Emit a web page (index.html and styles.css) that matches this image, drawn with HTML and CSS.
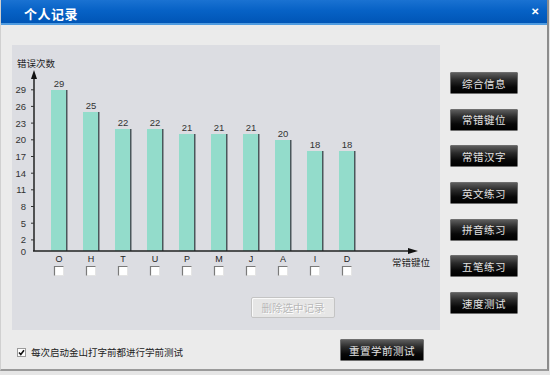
FILE: index.html
```html
<!DOCTYPE html>
<html>
<head>
  <meta charset="utf-8">
  <link rel="stylesheet" href="styles.css">
</head>
<body>
  <div class="window">
    <div class="titlebar">
      <span class="title">个人记录</span>
      <span class="close">&#x2715;</span>
    </div>
    <div class="content">
      <div class="panel">
        <svg class="chart" width="428" height="252" viewBox="0 0 428 252">
          <text class="axis-label" x="5" y="22">错误次数</text>
          <!-- y axis -->
          <line class="axis" x1="22" y1="31" x2="22" y2="206"/>
          <polygon class="arrow" points="22,25 19,34 25,34"/>
          <g class="ticks">
            <line x1="19" y1="44.8" x2="22" y2="44.8"/>
            <line x1="19" y1="61.4" x2="22" y2="61.4"/>
            <line x1="19" y1="78.1" x2="22" y2="78.1"/>
            <line x1="19" y1="94.8" x2="22" y2="94.8"/>
            <line x1="19" y1="111.5" x2="22" y2="111.5"/>
            <line x1="19" y1="128.2" x2="22" y2="128.2"/>
            <line x1="19" y1="144.8" x2="22" y2="144.8"/>
            <line x1="19" y1="161.5" x2="22" y2="161.5"/>
            <line x1="19" y1="178.2" x2="22" y2="178.2"/>
            <line x1="19" y1="194.9" x2="22" y2="194.9"/>
          </g>
          <g class="tick-labels">
            <text x="14" y="48.3">29</text>
            <text x="14" y="64.9">26</text>
            <text x="14" y="81.6">23</text>
            <text x="14" y="98.3">20</text>
            <text x="14" y="115">17</text>
            <text x="14" y="131.7">14</text>
            <text x="14" y="148.3">11</text>
            <text x="14" y="165">8</text>
            <text x="14" y="181.7">5</text>
            <text x="14" y="198.4">2</text>
            <text x="14" y="210">0</text>
          </g>
          <!-- bars -->
          <g class="bars">
            <rect x="39" y="45" width="15" height="161"/>
            <rect x="71" y="67" width="15" height="139"/>
            <rect x="103" y="84" width="15" height="122"/>
            <rect x="135" y="84" width="15" height="122"/>
            <rect x="167" y="89" width="15" height="117"/>
            <rect x="199" y="89" width="15" height="117"/>
            <rect x="231" y="89" width="15" height="117"/>
            <rect x="263" y="95" width="15" height="111"/>
            <rect x="295" y="106" width="15" height="100"/>
            <rect x="327" y="106" width="15" height="100"/>
          </g>
          <g class="bar-edges">
            <rect x="54" y="45" width="1.5" height="161"/>
            <rect x="86" y="67" width="1.5" height="139"/>
            <rect x="118" y="84" width="1.5" height="122"/>
            <rect x="150" y="84" width="1.5" height="122"/>
            <rect x="182" y="89" width="1.5" height="117"/>
            <rect x="214" y="89" width="1.5" height="117"/>
            <rect x="246" y="89" width="1.5" height="117"/>
            <rect x="278" y="95" width="1.5" height="111"/>
            <rect x="310" y="106" width="1.5" height="100"/>
            <rect x="342" y="106" width="1.5" height="100"/>
          </g>
          <g class="values">
            <text x="47" y="42">29</text>
            <text x="79" y="64">25</text>
            <text x="111" y="81">22</text>
            <text x="143" y="81">22</text>
            <text x="175" y="86">21</text>
            <text x="207" y="86">21</text>
            <text x="239" y="86">21</text>
            <text x="271" y="92">20</text>
            <text x="303" y="103">18</text>
            <text x="335" y="103">18</text>
          </g>
          <!-- x axis -->
          <line class="axis" x1="21" y1="206" x2="398" y2="206"/>
          <polygon class="arrow" points="406,206 396,203 396,209"/>
          <text class="axis-label" x="380" y="221">常错键位</text>
          <g class="keys">
            <text x="47" y="217">O</text>
            <text x="79" y="217">H</text>
            <text x="111" y="217">T</text>
            <text x="143" y="217">U</text>
            <text x="175" y="217">P</text>
            <text x="207" y="217">M</text>
            <text x="239" y="217">J</text>
            <text x="271" y="217">A</text>
            <text x="303" y="217">I</text>
            <text x="335" y="217">D</text>
          </g>
          <g class="boxes">
            <rect x="42.5" y="221.5" width="9" height="9"/>
            <rect x="74.5" y="221.5" width="9" height="9"/>
            <rect x="106.5" y="221.5" width="9" height="9"/>
            <rect x="138.5" y="221.5" width="9" height="9"/>
            <rect x="170.5" y="221.5" width="9" height="9"/>
            <rect x="202.5" y="221.5" width="9" height="9"/>
            <rect x="234.5" y="221.5" width="9" height="9"/>
            <rect x="266.5" y="221.5" width="9" height="9"/>
            <rect x="298.5" y="221.5" width="9" height="9"/>
            <rect x="330.5" y="221.5" width="9" height="9"/>
          </g>
          <g class="box-shade">
            <path d="M42.5,230.5 V221.5 H51.5"/>
            <path d="M74.5,230.5 V221.5 H83.5"/>
            <path d="M106.5,230.5 V221.5 H115.5"/>
            <path d="M138.5,230.5 V221.5 H147.5"/>
            <path d="M170.5,230.5 V221.5 H179.5"/>
            <path d="M202.5,230.5 V221.5 H211.5"/>
            <path d="M234.5,230.5 V221.5 H243.5"/>
            <path d="M266.5,230.5 V221.5 H275.5"/>
            <path d="M298.5,230.5 V221.5 H307.5"/>
            <path d="M330.5,230.5 V221.5 H339.5"/>
          </g>
        </svg>
        <button class="delete-btn" disabled>删除选中记录</button>
      </div>
      <div class="side">
        <button class="dark-btn">综合信息</button>
        <button class="dark-btn">常错键位</button>
        <button class="dark-btn">常错汉字</button>
        <button class="dark-btn">英文练习</button>
        <button class="dark-btn">拼音练习</button>
        <button class="dark-btn">五笔练习</button>
        <button class="dark-btn">速度测试</button>
      </div>
    </div>
    <div class="footer">
      <label class="check-row">
        <svg class="check" width="9" height="9" viewBox="0 0 9 9">
          <rect x="0.5" y="0.5" width="8" height="8" fill="#fff" stroke="#9a9a9a"/>
          <path d="M2,4.5 L3.8,6.5 L7,2.2" fill="none" stroke="#111" stroke-width="1.6"/>
        </svg>
        每次启动金山打字前都进行学前测试
      </label>
      <button class="dark-btn reset-btn">重置学前测试</button>
    </div>
  </div>
</body>
</html>
```

FILE: styles.css
```css
html {
  background: #e6e6e6;
}
body {
  margin: 0;
  width: 550px;
  height: 375px;
  overflow: hidden;
  font-family: "Liberation Sans", "Noto Sans CJK SC", sans-serif;
}
.window {
  width: 546px;
  height: 369px;
  background: #ebebeb;
  border-left: 1px solid #d0d0d0;
  border-right: 2px solid #8c8c8c;
  border-bottom: 2px solid #9a9a9a;
}
.titlebar {
  height: 23px;
  background: linear-gradient(to bottom, #1a72d2 0%, #0762c6 45%, #0055b6 100%);
  border-bottom: 2px solid #4f9be0;
  display: flex;
  align-items: center;
  justify-content: space-between;
  padding: 0 8px 0 23px;
  color: #fff;
}
.title {
  font-size: 13px;
  font-weight: bold;
  letter-spacing: 0.5px;
  margin-top: 3px;
}
.close {
  font-size: 10px;
  font-weight: bold;
}
.content {
  display: flex;
  padding: 20px 0 0 11px;
  height: 285px;
}
.panel {
  width: 428px;
  height: 285px;
  background: #dcdde2;
}
.chart {
  display: block;
  font-family: "Liberation Sans", "Noto Sans CJK SC", sans-serif;
}
.axis {
  stroke: #222;
  stroke-width: 1.5;
}
.arrow {
  fill: #111;
}
.ticks line {
  stroke: #333;
  stroke-width: 1;
}
.axis-label {
  font-size: 9.5px;
  fill: #222;
}
.tick-labels text {
  font-size: 9.5px;
  fill: #333;
  text-anchor: end;
}
.bars rect {
  fill: #93dccb;
}
.bar-edges rect {
  fill: #4a575b;
}
.values text {
  font-size: 9.5px;
  fill: #333;
  text-anchor: middle;
}
.keys text {
  font-size: 9px;
  fill: #222;
  text-anchor: middle;
}
.boxes rect {
  fill: #fff;
  stroke: #e4e4e4;
  stroke-width: 1;
}
.box-shade path {
  fill: none;
  stroke: #7a7a7a;
  stroke-width: 1.2;
}
.delete-btn {
  display: block;
  margin-left: 239px;
  width: 84px;
  height: 21px;
  padding: 0;
  background: #e6e6e6;
  border: 1px solid #c4c4c4;
  box-shadow: inset 1px 1px 0 #fafafa;
  border-radius: 2px;
  font-family: "Liberation Sans", "Noto Sans CJK SC", sans-serif;
  font-size: 10.5px;
  color: #b8b8b8;
  text-shadow: 1px 1px 0 #fff;
}
.side {
  display: flex;
  flex-direction: column;
  gap: 14.7px;
  padding: 27px 0 0 10px;
}
.dark-btn {
  width: 68px;
  height: 22px;
  padding: 0;
  background: linear-gradient(to bottom, #5c5c5c 0%, #2a2a2a 35%, #080808 70%, #000 100%);
  border: 1px solid #6e6e6e;
  border-radius: 1px;
  font-family: "Liberation Sans", "Noto Sans CJK SC", sans-serif;
  font-size: 10.5px;
  color: #e2e2e2;
  letter-spacing: 0.5px;
}
.footer {
  display: flex;
  align-items: center;
  justify-content: space-between;
  padding: 9px 0 0 16px;
  width: 407px;
  height: 22px;
}
.check-row {
  display: flex;
  align-items: center;
  gap: 5px;
  font-size: 9.5px;
  color: #222;
  margin-top: 4px;
}
.check {
  display: block;
}
.reset-btn {
  width: 84px;
  height: 22px;
}
```
